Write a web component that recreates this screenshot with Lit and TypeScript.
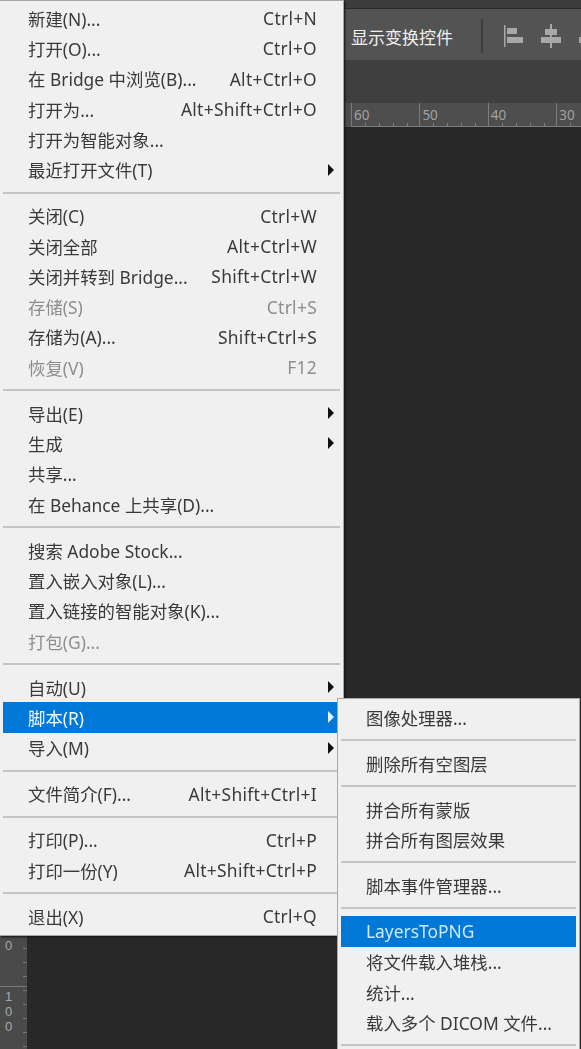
import { LitElement, html, css, nothing } from "lit";
import { customElement } from "lit/decorators.js";

type Item = { t?: string; k?: string; d?: boolean; a?: boolean; h?: boolean; sep?: boolean };
const S: Item = { sep: true };
const MAIN: Item[] = [
  { t: "新建(N)...", k: "Ctrl+N" }, { t: "打开(O)...", k: "Ctrl+O" },
  { t: "在 Bridge 中浏览(B)...", k: "Alt+Ctrl+O" }, { t: "打开为...", k: "Alt+Shift+Ctrl+O" },
  { t: "打开为智能对象..." }, { t: "最近打开文件(T)", a: true }, S,
  { t: "关闭(C)", k: "Ctrl+W" }, { t: "关闭全部", k: "Alt+Ctrl+W" },
  { t: "关闭并转到 Bridge...", k: "Shift+Ctrl+W" }, { t: "存储(S)", k: "Ctrl+S", d: true },
  { t: "存储为(A)...", k: "Shift+Ctrl+S" }, { t: "恢复(V)", k: "F12", d: true }, S,
  { t: "导出(E)", a: true }, { t: "生成", a: true }, { t: "共享..." }, { t: "在 Behance 上共享(D)..." }, S,
  { t: "搜索 Adobe Stock..." }, { t: "置入嵌入对象(L)..." }, { t: "置入链接的智能对象(K)..." }, { t: "打包(G)...", d: true }, S,
  { t: "自动(U)", a: true }, { t: "脚本(R)", a: true, h: true }, { t: "导入(M)", a: true }, S,
  { t: "文件简介(F)...", k: "Alt+Shift+Ctrl+I" }, S,
  { t: "打印(P)...", k: "Ctrl+P" }, { t: "打印一份(Y)", k: "Alt+Shift+Ctrl+P" }, S,
  { t: "退出(X)", k: "Ctrl+Q" },
];
const SUB: Item[] = [
  { t: "图像处理器..." }, S, { t: "删除所有空图层" }, S,
  { t: "拼合所有蒙版" }, { t: "拼合所有图层效果" }, S,
  { t: "脚本事件管理器..." }, S,
  { t: "LayersToPNG", h: true }, { t: "将文件载入堆栈..." }, { t: "统计..." }, { t: "载入多个 DICOM 文件..." }, S,
];

@customElement("app-root")
export class AppRoot extends LitElement {
  static styles = css`
    :host { display: block; position: relative; width: 581px; height: 1049px; overflow: hidden;
      background: #282828; font-family: "Noto Sans", "Noto Sans CJK SC", sans-serif; }
    .top { height: 8px; background: #3c3c3c; border-bottom: 1px solid #2a2a2a; }
    .options { height: 51px; background: #535353; display: flex; align-items: center; padding: 3px 0 0 351px; box-sizing: border-box;
      color: #f0f0f0; font-size: 17px; white-space: nowrap; }
    .vr { flex: none; width: 2px; height: 34px; background: #3e3e3e; margin: 0 20px 0 28px; }
    .options svg { flex: none; margin-right: 18px; }
    .tabs { height: 43px; background: #3f3f3f; }
    .ruler { height: 24px; background: #4e4e4e; display: flex; padding-left: 351px; overflow: hidden; }
    .cell { flex: none; width: 68.4px; box-sizing: border-box; border-left: 1px solid #7c7c7c; color: #a2a2a2; font-size: 13.5px;
      line-height: 24px; padding-left: 2px;
      background: linear-gradient(#7c7c7c, #7c7c7c) left bottom / 100% 1px no-repeat,
        repeating-linear-gradient(90deg, transparent 0 13px, #7c7c7c 13px 14px) left bottom / 100% 4px no-repeat; }
    .vruler { position: absolute; left: 0; top: 935px; width: 27px; height: 114px; color: #a8a8a8;
      font-family: "Liberation Sans", sans-serif; font-size: 13px; line-height: 15px; box-sizing: border-box; padding: 3px 0 0 0;
      background: repeating-linear-gradient(180deg, transparent 0 13px, #777 13px 14px) right top / 4px 100% no-repeat, #4a4a4a; }
    .vruler div { padding-left: 5px; }
    .vruler div + div { margin-top: 33px; border-top: 1px solid #777; padding-top: 2px; }
    .menu { position: absolute; background: #f0f0f0; box-sizing: border-box; color: #3a3a3a; font-size: 17.4px; filter: blur(0.4px); }
    .main { left: 0; top: 0; width: 344px; height: 936px; padding: 2px 3px 0; border: solid #a8a8a8; border-width: 1px 1px 1px 0;
      box-shadow: 1px 1px 2px #111; }
    .sub { left: 337px; top: 698px; width: 243px; height: 360px; padding: 3px 3px; border: 1px solid #a8a8a8; }
    .row { height: 30.32px; display: flex; align-items: center; padding: 0 23px 0 25px; position: relative; white-space: nowrap; }
    .k { margin-left: auto; letter-spacing: 0.3px; }
    .d { color: #8e8e8e; }
    .h { background: #0078d7; color: #f4faff; }
    .sub .h { color: #cfe9ff; }
    .arrow { position: absolute; right: 6px; top: 9px; width: 0; height: 0; border-left: 6px solid #111; border-top: 6px solid transparent; border-bottom: 6px solid transparent; }
    .h .arrow { border-left-color: #e4f2ff; }
    .sep { height: 15.7px; display: flex; align-items: center; }
    .sep::after { content: ""; flex: 1; height: 2px; background: #c4c4c4; }
  `;

  private list(items: Item[]) {
    return items.map((i) =>
      i.sep
        ? html`<div class="sep"></div>`
        : html`<div class="row ${i.d ? "d" : ""} ${i.h ? "h" : ""}">
            <span>${i.t}</span>${i.k ? html`<span class="k">${i.k}</span>` : nothing}${i.a ? html`<i class="arrow"></i>` : nothing}
          </div>`
    );
  }

  render() {
    return html`
      <div class="top"></div>
      <div class="options">
        <span>显示变换控件</span>
        <div class="vr"></div>
        <svg width="20" height="24" viewBox="0 0 20 24"><path fill="#a8a8a8" d="M1 1h1.5v22H1zM4 4h10v6H4zM4 13h16v6H4z"/></svg>
        <svg width="20" height="24" viewBox="0 0 20 24"><path fill="#a8a8a8" d="M9 0h2v24H9zM4 5h12v6H4zM0 13h20v6H0z"/></svg>
        <svg width="20" height="24" viewBox="0 0 20 24"><path fill="#a8a8a8" d="M0 13h20v6H0z"/></svg>
      </div>
      <div class="tabs"></div>
      <div class="ruler">${["60", "50", "40", "30"].map((n) => html`<div class="cell">${n}</div>`)}</div>
      <div class="vruler"><div>0</div><div>1<br />0<br />0</div></div>
      <div class="menu main">${this.list(MAIN)}</div>
      <div class="menu sub">${this.list(SUB)}</div>
    `;
  }
}
